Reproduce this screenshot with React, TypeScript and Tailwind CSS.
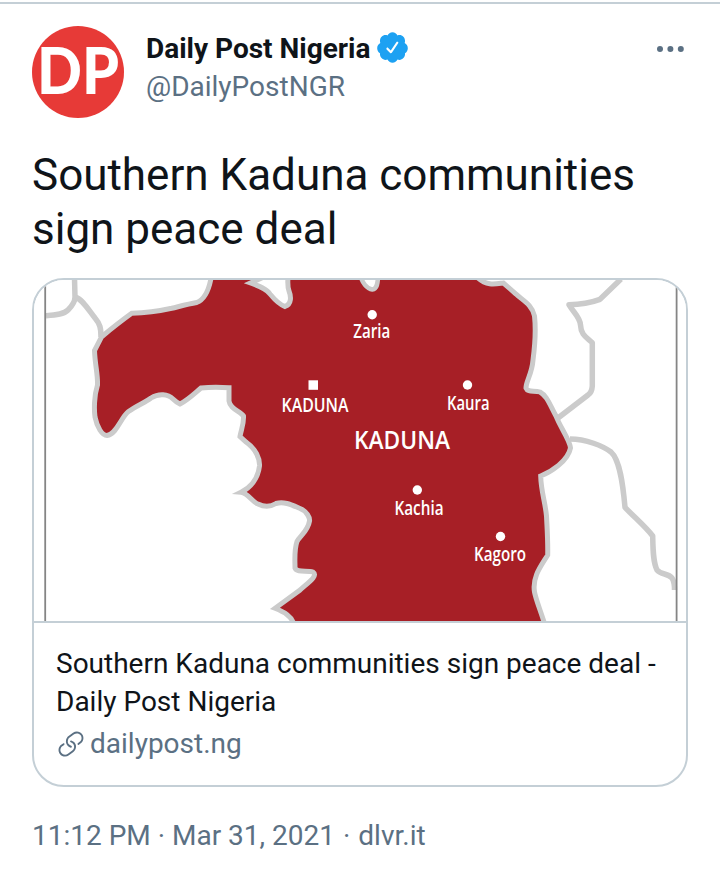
const cities = [
  { name: 'Zaria', x: 353.3, y: 338.4, width: 37, dot: [372.2, 314.8] },
  { name: 'Kaura', x: 447, y: 410, width: 42.5, dot: [467.5, 385] },
  { name: 'Kachia', x: 394.5, y: 514.8, width: 49, dot: [417.3, 490] },
  { name: 'Kagoro', x: 474, y: 561.4, width: 52, dot: [500.5, 536.5] },
];

function Avatar() {
  return (
    <svg viewBox="0 0 92 92" className="size-[92px] shrink-0 overflow-visible" role="img" aria-label="Daily Post">
      <circle cx="46" cy="46" r="46" fill="#e73a37" />
      <text
        x="5"
        y="68"
        fill="#fff"
        fontSize="64"
        textLength="82"
        lengthAdjust="spacingAndGlyphs"
        className="font-[Lato,sans-serif] font-black"
      >
        DP
      </text>
    </svg>
  );
}

function VerifiedBadge() {
  return (
    <svg viewBox="0 0 24 24" className="mb-[3px] size-[35px] shrink-0" fill="#1da1f2">
      <path d="M22.5 12.5c0-1.58-.875-2.95-2.148-3.6.154-.435.238-.905.238-1.4 0-2.21-1.71-3.998-3.818-3.998-.47 0-.92.084-1.336.25C14.818 2.415 13.51 1.5 12 1.5s-2.816.917-3.437 2.25c-.415-.165-.866-.25-1.336-.25-2.11 0-3.818 1.79-3.818 4 0 .494.083.964.237 1.4-1.272.65-2.147 2.018-2.147 3.6 0 1.495.782 2.798 1.942 3.486-.02.17-.032.34-.032.514 0 2.21 1.708 4 3.818 4 .47 0 .92-.086 1.335-.25.62 1.334 1.926 2.25 3.437 2.25 1.512 0 2.818-.916 3.437-2.25.415.163.865.248 1.336.248 2.11 0 3.818-1.79 3.818-4 0-.174-.012-.344-.033-.513 1.158-.687 1.943-1.99 1.943-3.484zm-6.616-3.334l-4.334 6.5c-.145.217-.382.334-.625.334-.143 0-.288-.04-.416-.126l-.115-.094-2.415-2.415c-.293-.293-.293-.768 0-1.06s.768-.294 1.06 0l1.77 1.767 3.825-5.74c.23-.345.696-.436 1.04-.207.346.23.44.696.21 1.04z" />
    </svg>
  );
}

function LinkIcon() {
  return (
    <svg viewBox="0 0 24 24" className="size-[30px] shrink-0" fill="currentColor">
      <path d="M11.96 14.945c-.067 0-.136-.01-.203-.027-1.13-.318-2.097-.986-2.795-1.932-.832-1.125-1.176-2.508-.968-3.893s.942-2.605 2.068-3.438l3.53-2.608c2.322-1.716 5.61-1.224 7.33 1.1.83 1.127 1.175 2.51.967 3.895s-.943 2.605-2.07 3.438l-1.48 1.094c-.333.246-.804.175-1.05-.158-.246-.334-.176-.804.158-1.05l1.48-1.095c.803-.592 1.327-1.463 1.476-2.45.148-.988-.098-1.975-.69-2.778-1.225-1.656-3.572-2.01-5.23-.784l-3.53 2.608c-.802.593-1.326 1.464-1.475 2.45-.15.99.097 1.975.69 2.778.498.675 1.187 1.15 1.992 1.377.4.114.633.528.52.928-.092.33-.394.547-.722.547z" />
      <path d="M7.27 22.054c-1.61 0-3.197-.735-4.225-2.125-.832-1.127-1.176-2.51-.968-3.894s.943-2.605 2.07-3.438l1.478-1.094c.334-.245.805-.175 1.05.158s.177.804-.157 1.05l-1.48 1.095c-.803.593-1.326 1.464-1.475 2.45-.148.99.097 1.975.69 2.778 1.225 1.657 3.57 2.01 5.23.785l3.528-2.608c1.658-1.225 2.01-3.57.785-5.23-.498-.674-1.187-1.15-1.992-1.376-.4-.113-.633-.527-.52-.927.112-.4.528-.63.926-.522 1.13.318 2.096.986 2.794 1.932 1.717 2.324 1.224 5.612-1.1 7.33l-3.53 2.608c-.933.693-2.023 1.026-3.105 1.026z" />
    </svg>
  );
}

function KadunaMap() {
  return (
    <svg viewBox="34 280 652 341" className="block h-[341px] w-full bg-white">
      {/* neighbouring state borders */}
      <g fill="none" stroke="#cbcbcb" strokeWidth="5.5" strokeLinejoin="round">
        <path d="M46 315.7C57 315 64 314 68 310C73 305 75 300 75 297L74.5 278" />
        <path d="M76 297.5C82 299 88 309 95 318C100 324 101 328 101 337" />
        <path d="M621 279L600 299.3C590 303 582 304.5 569 304.7C573 312 580 317 580.5 325C581 335 586 337 592.3 342.7V386C592 391 591 393 588 395L558 418" />
        <path d="M570 439C586 439 603 446 611 452C620 460 623 485 625 507.3C634 517 645 526 652.7 536C653 550 653 562 657 570C661 575 668 573 672 578C674 581 674.5 583 674.5 590" />
      </g>

      <path
        d="M211.7 274C210 286 206 299 196.7 302.5C188 304 181 306 171.7 308.3C155 312 145 313 131.7 313.3C121 321 111 329 101.7 336.7L94.5 350.5C95 365 98 375 97.5 385C94 396 94 410 95 417C97 427 102 435.5 107 435.5C117 434 121 417 128.5 411.5C138 405 146 402 151 398C159 393 168 394 173 399C175 401 178 403 180 404C188 400 195 393 201 388C210 387 219 387 229 387.7V401C230 409 240 411 243.5 416C244 424 241 430 240 436.5L246 442C256 449 260 459 259.5 466C258 479 250 488 241 492.3C248 493 252 502 258 504C266 508 272 506 276 503.5C284 501 292 505 299 508C307 511 310 518 309.5 521C308 531 300 536 297 541.5C294 550 295 560 295 568C297 573 307 570 313 572C319 576 306 584 300 590L275 608.3C284 612 292 616 294 625H545C540 609 536 600 534.5 592C532 577 541 566 547.7 555C548 540 547 527 546.5 516C545 501 541 491 540.7 476C551 472 568 461 570.5 448C570 440 560 427 556 416C549 403 547 396 540 392C534 390 528 393 526 388C526 381 532 374 533 360C535 345 536 330 534.5 316C532 304 522 300 516 294L503.5 283C495 284 487 286 478 278V274Z"
        fill="#a71f26"
        stroke="#cbcbcb"
        strokeWidth="5"
        strokeMiterlimit="8"
      />

      <path
        d="M266 276L250.5 283C259 286 267 289 270 294C275 300 280 305 285 306.5C292 304 291 296 289 291C287 286 288 282 288 274Z"
        fill="#fff"
        stroke="#cbcbcb"
        strokeWidth="5"
        strokeMiterlimit="8"
      />
      <path d="M360 274C362 283 367 289 372.3 289.5C377 289 378 284 378 274Z" fill="#fff" stroke="#cbcbcb" strokeWidth="4.5" />

      {/* frame edges */}
      <path d="M45.2 280V621M676.6 280V621" stroke="#858585" strokeWidth="1.8" />

      <g fill="#fff" className="font-['Open_Sans',sans-serif] font-semibold" fontSize="19">
        {cities.map(({ name, x, y, width, dot }) => (
          <g key={name}>
            <circle cx={dot[0]} cy={dot[1]} r="4.7" />
            <text x={x} y={y} textLength={width} lengthAdjust="spacingAndGlyphs">{name}</text>
          </g>
        ))}
        <rect x="308.5" y="380.3" width="9.5" height="9.5" />
        <text x="281.5" y="412" textLength="67" lengthAdjust="spacingAndGlyphs">KADUNA</text>
        <text x="354" y="448.7" fontSize="26" textLength="96" lengthAdjust="spacingAndGlyphs">KADUNA</text>
      </g>
    </svg>
  );
}

export default function App() {
  return (
    <div className="h-[876px] w-[720px] overflow-hidden bg-white pt-[2px] font-[Roboto,sans-serif] text-[#0f1419]">
      <article className="border-t-2 border-[#c4cfd6] px-8 pt-[22px]">
        <header className="flex items-start">
          <Avatar />
          <div className="ml-[22px] flex flex-col pt-1">
            <div className="flex h-[38px] items-center gap-[5px]">
              <span className="text-[28px] leading-[38px] font-bold">Daily Post Nigeria</span>
              <VerifiedBadge />
            </div>
            <span className="text-[28px] leading-[38px] text-[#5b7083]">@DailyPostNGR</span>
          </div>
          <button className="mt-5 mr-1 ml-auto" aria-label="More">
            <svg viewBox="0 0 27 6" className="h-1.5 w-[27px]" fill="#5b7083">
              <circle cx="3" cy="3" r="3" />
              <circle cx="13.4" cy="3" r="3" />
              <circle cx="23.8" cy="3" r="3" />
            </svg>
          </button>
        </header>

        <p className="mt-[30px] text-[44px] leading-[54px]">Southern Kaduna communities sign peace deal</p>

        <a className="mt-[22px] block overflow-hidden rounded-[32px] border-2 border-[#c4cfd6]">
          <KadunaMap />
          <div className="flex h-[164px] flex-col border-t-2 border-[#c4cfd6] px-[22px] pt-[22px] text-[28px] leading-[38px]">
            <span>Southern Kaduna communities sign peace deal - Daily Post Nigeria</span>
            <span className="mt-1 flex items-center gap-1 text-[#5b7083]">
              <LinkIcon />
              dailypost.ng
            </span>
          </div>
        </a>

        <div className="mt-[30px] flex text-[28px] leading-[38px] text-[#5b7083]">
          <span>11:12 PM · Mar 31, 2021</span>
          <span className="mx-2">·</span>
          <span>dlvr.it</span>
        </div>
      </article>
    </div>
  );
}
